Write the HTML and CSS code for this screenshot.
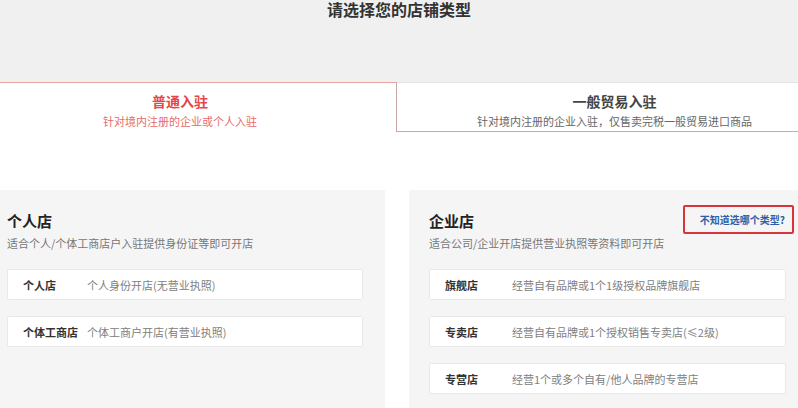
FILE: index.html
```html
<!DOCTYPE html>
<html lang="zh">
<head>
<meta charset="utf-8">
<link rel="stylesheet" href="styles.css">
</head>
<body>
<div class="page">
  <header class="top">
    <h1 class="title">请选择您的店铺类型</h1>
  </header>
  <nav class="tabs">
    <div class="tab tab-active">
      <div class="tab-name">普通入驻</div>
      <div class="tab-desc">针对境内注册的企业或个人入驻</div>
    </div>
    <div class="tab tab-other">
      <div class="tab-name">一般贸易入驻</div>
      <div class="tab-desc">针对境内注册的企业入驻，仅售卖完税一般贸易进口商品</div>
    </div>
  </nav>
  <section class="cards">
    <div class="card card-left">
      <div class="card-head">
        <h2 class="card-title">个人店</h2>
      </div>
      <p class="card-desc">适合个人/个体工商店户入驻提供身份证等即可开店</p>
      <ul class="items">
        <li class="item"><span class="item-label">个人店</span><span class="item-value">个人身份开店(无营业执照)</span></li>
        <li class="item"><span class="item-label">个体工商店</span><span class="item-value">个体工商户开店(有营业执照)</span></li>
      </ul>
    </div>
    <div class="card card-right">
      <div class="card-head">
        <h2 class="card-title">企业店</h2>
        <a class="help">不知道选哪个类型?</a>
      </div>
      <p class="card-desc">适合公司/企业开店提供营业执照等资料即可开店</p>
      <ul class="items">
        <li class="item"><span class="item-label">旗舰店</span><span class="item-value">经营自有品牌或1个1级授权品牌旗舰店</span></li>
        <li class="item"><span class="item-label">专卖店</span><span class="item-value">经营自有品牌或1个授权销售专卖店(≤2级)</span></li>
        <li class="item"><span class="item-label">专营店</span><span class="item-value">经营1个或多个自有/他人品牌的专营店</span></li>
      </ul>
    </div>
  </section>
</div>
</body>
</html>
```
FILE: styles.css
```css
* { box-sizing: border-box; }
html, body { margin: 0; padding: 0; }
body {
  width: 798px;
  height: 408px;
  overflow: hidden;
  background: #ffffff;
  font-family: "Microsoft YaHei", "Noto Sans CJK SC", "Noto Sans", sans-serif;
  color: #333;
}
.top {
  height: 82px;
  background: #f0f0f0;
  display: flex;
  justify-content: center;
  align-items: flex-start;
  padding-top: 3px;
}
.title {
  margin: 0;
  font-size: 16px;
  line-height: 12px;
  font-weight: 700;
  color: #333;
}
.tabs {
  display: flex;
  height: 50px;
  background: #f0f0f0;
}
.tab {
  flex: 0 0 auto;
  display: flex;
  flex-direction: column;
  align-items: center;
  background: #fff;
  padding-top: 9px;
}
.tab-active {
  width: 397px;
  border-top: 1px solid #eaa4a4;
  border-right: 1px solid #c9a6a6;
  height: 50px;
  padding-right: 36px;
}
.tab-other {
  width: 401px;
  border-top: 1px solid #e4e4e4;
  border-bottom: 1px solid #d9a3a3;
  height: 50px;
  padding-left: 34px;
}
.tab-name {
  font-size: 14px;
  line-height: 18px;
  font-weight: 700;
  color: #444;
}
.tab-desc {
  margin-top: 4px;
  font-size: 11px;
  line-height: 14px;
  color: #666;
}
.tab-active .tab-name { color: #e2474b; }
.tab-active .tab-desc { color: #e66b6b; }
.cards {
  display: flex;
  gap: 24px;
  margin-top: 58px;
}
.card {
  background: #f5f5f5;
  height: 230px;
  padding-top: 18px;
}
.card-left {
  width: 385px;
  padding-left: 7px;
  padding-right: 22px;
}
.card-right {
  width: 389px;
  padding-left: 20px;
  padding-right: 12px;
}
.card-head {
  display: flex;
  justify-content: space-between;
  align-items: center;
  height: 25px;
}
.card-title {
  margin: 0;
  font-size: 15px;
  line-height: 20px;
  font-weight: 700;
  color: #222;
}
.help {
  display: flex;
  align-items: center;
  height: 29px;
  padding: 0 7px 0 15px;
  margin-right: -8px;
  margin-top: -3px;
  border: 2px solid #d8343b;
  border-radius: 2px;
  font-size: 10px;
  font-weight: 700;
  color: #2e5ea6;
  background: #f5f5f5;
}
.card-desc {
  margin: 2px 0 0;
  font-size: 11px;
  line-height: 16px;
  color: #777;
}
.items {
  list-style: none;
  margin: 18px 0 0;
  padding: 0;
  display: flex;
  flex-direction: column;
  gap: 16px;
}
.item {
  height: 31px;
  background: #fff;
  border: 1px solid #e9e9e9;
  border-radius: 2px;
  display: flex;
  align-items: center;
  padding-left: 15px;
  font-size: 11px;
}
.item-label {
  min-width: 60px;
  margin-right: 4px;
  font-weight: 700;
  color: #333;
}
.card-right .item-label { min-width: 63px; }
.item-value {
  color: #808080;
}
```
